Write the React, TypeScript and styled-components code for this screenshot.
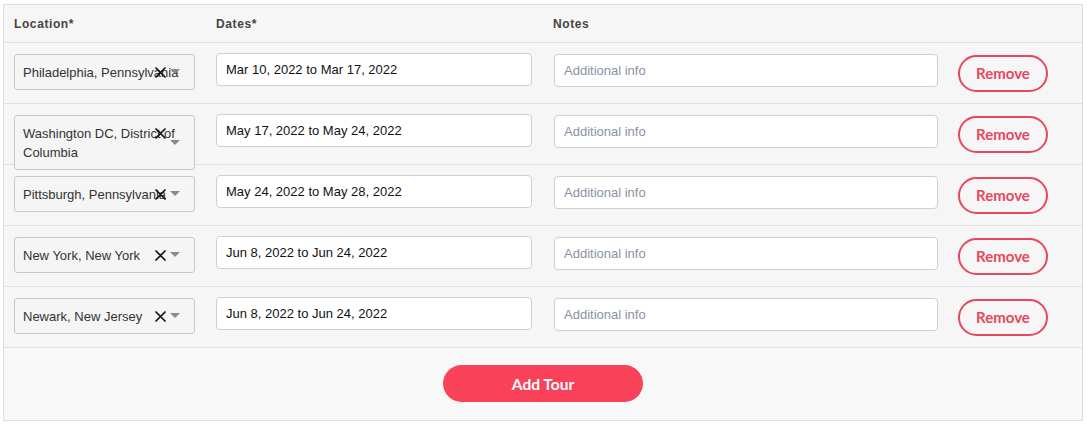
import React from "react";
import styled, { createGlobalStyle } from "styled-components";

const GlobalStyle = createGlobalStyle`
  html, body { margin: 0; padding: 0; background: #ffffff; }
  body { font-family: "Liberation Sans", Arial, sans-serif; }
  * { box-sizing: border-box; }
`;

const Panel = styled.div`
  margin: 4px 5px 0 3px;
  width: 1080px;
  border: 1px solid #dedede;
  background: #f6f6f6;
`;

const HeaderRow = styled.div`
  display: grid;
  grid-template-columns: 181px 316px 385px auto;
  column-gap: 21px;
  align-items: center;
  height: 38px;
  padding: 0 10px;
  border-bottom: 1px solid #e0e0e0;
`;

const HeaderCell = styled.div`
  font-family: "Liberation Sans", Arial, sans-serif;
  font-weight: 700;
  font-size: 12px;
  letter-spacing: 0.6px;
  color: #444;
  padding-top: 1px;
`;

const Row = styled.div`
  display: grid;
  grid-template-columns: 181px 316px 385px auto;
  column-gap: 21px;
  align-items: start;
  height: 61px;
  padding: 11px 10px 0;
  border-bottom: 1px solid #e0e0e0;
`;

const SelectBox = styled.div`
  position: relative;
  min-height: 35px;
  padding: 8px 8px 7px 8px;
  border: 1px solid #c9c9c9;
  border-radius: 3px;
  background: #f5f5f5;
  font-size: 13px;
  line-height: 19px;
  color: #333;
  z-index: 1;
`;

const ClearIcon = styled.svg`
  position: absolute;
  left: 140px;
  top: 12px;
  width: 11px;
  height: 11px;
`;

const Arrow = styled.span`
  position: absolute;
  left: 155px;
  top: 50%;
  margin-top: -3px;
  width: 0;
  height: 0;
  border-left: 5px solid transparent;
  border-right: 5px solid transparent;
  border-top: 5px solid #8a8a8a;
`;

const TextInput = styled.input`
  width: 100%;
  height: 33px;
  margin-top: -1px;
  padding: 0 9px;
  border: 1px solid #cfcfcf;
  border-radius: 4px;
  background: #fff;
  font-family: "Liberation Sans", Arial, sans-serif;
  font-size: 13px;
  color: #111;
  outline: none;
  &::placeholder { color: #8892a3; }
`;

const NotesInput = styled(TextInput)`
  margin-top: 0;
  margin-left: 1px;
  width: 384px;
`;

const RemoveButton = styled.button`
  width: 90px;
  height: 37px;
  margin-top: 1px;
  margin-left: -1px;
  border: 2px solid #e8475c;
  border-radius: 19px;
  background: transparent;
  color: #e8475c;
  font-family: Lato, "Open Sans", sans-serif;
  font-weight: 700;
  font-size: 15px;
  padding: 0 0 1px;
  cursor: pointer;
`;

const Footer = styled.div`
  display: flex;
  justify-content: center;
  padding: 17px 0 18px;
  background: #f8f8f9;
`;

const AddButton = styled.button`
  width: 200px;
  height: 37px;
  border: none;
  border-radius: 19px;
  background: #f9425a;
  color: #fff;
  font-family: Lato, "Open Sans", sans-serif;
  font-weight: 700;
  font-size: 15.5px;
  cursor: pointer;
`;

type Tour = { location: string; dates: string };

const tours: Tour[] = [
  { location: "Philadelphia, Pennsylvania", dates: "Mar 10, 2022 to Mar 17, 2022" },
  { location: "Washington DC, District of Columbia", dates: "May 17, 2022 to May 24, 2022" },
  { location: "Pittsburgh, Pennsylvania", dates: "May 24, 2022 to May 28, 2022" },
  { location: "New York, New York", dates: "Jun 8, 2022 to Jun 24, 2022" },
  { location: "Newark, New Jersey", dates: "Jun 8, 2022 to Jun 24, 2022" },
];

const LocationSelect: React.FC<{ value: string }> = ({ value }) => (
  <SelectBox>
    {value}
    <ClearIcon viewBox="0 0 11 11">
      <path d="M1 1 L10 10 M10 1 L1 10" stroke="#111" strokeWidth="1.7" strokeLinecap="round" fill="none" />
    </ClearIcon>
    <Arrow />
  </SelectBox>
);

export default function App() {
  return (
    <>
      <GlobalStyle />
      <Panel>
        <HeaderRow>
          <HeaderCell>Location*</HeaderCell>
          <HeaderCell>Dates*</HeaderCell>
          <HeaderCell>Notes</HeaderCell>
          <HeaderCell />
        </HeaderRow>
        {tours.map((t, i) => (
          <Row key={i}>
            <LocationSelect value={t.location} />
            <TextInput defaultValue={t.dates} />
            <NotesInput placeholder="Additional info" />
            <RemoveButton>Remove</RemoveButton>
          </Row>
        ))}
        <Footer>
          <AddButton>Add Tour</AddButton>
        </Footer>
      </Panel>
    </>
  );
}
